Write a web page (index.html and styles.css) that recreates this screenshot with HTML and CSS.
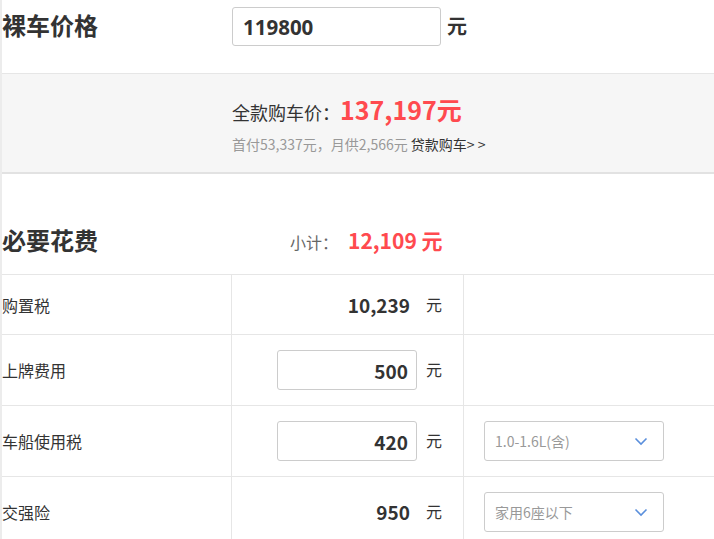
FILE: index.html
```html
<!DOCTYPE html>
<html lang="zh-CN">
<head>
  <meta charset="UTF-8">
  <meta name="viewport" content="width=device-width, initial-scale=1.0">
  <title>购车计算器</title>
  <link rel="stylesheet" href="styles.css">
</head>
<body>
<div class="calc">
  <div class="price-row">
    <h2 class="block-title">裸车价格</h2>
    <div class="price-field">
      <input type="text" class="price-input" value="119800">
      <span class="price-unit">元</span>
    </div>
  </div>

  <div class="total-band">
    <p class="total">全款购车价：<strong>137,197元</strong></p>
    <p class="loan">首付53,337元，月供2,566元 <a href="#">贷款购车&gt; &gt;</a></p>
  </div>

  <div class="section-head">
    <h2 class="block-title">必要花费</h2>
    <div class="subtotal">小计：<strong>12,109 元</strong></div>
  </div>

  <table class="fees">
    <tr class="row-short">
      <td class="fee-name">购置税</td>
      <td class="fee-value"><div class="val"><span class="fee-num">10,239</span><span class="unit">元</span></div></td>
      <td class="fee-opt"></td>
    </tr>
    <tr>
      <td class="fee-name">上牌费用</td>
      <td class="fee-value"><div class="val"><input type="text" class="fee-input" value="500"><span class="unit">元</span></div></td>
      <td class="fee-opt"></td>
    </tr>
    <tr>
      <td class="fee-name">车船使用税</td>
      <td class="fee-value"><div class="val"><input type="text" class="fee-input" value="420"><span class="unit">元</span></div></td>
      <td class="fee-opt">
        <div class="select-box">
          <span>1.0-1.6L(含)</span>
          <svg width="14" height="9" viewBox="0 0 14 9"><path d="M1.5 1.5 L7 7 L12.5 1.5" fill="none" stroke="#5a8fdc" stroke-width="1.6"/></svg>
        </div>
      </td>
    </tr>
    <tr>
      <td class="fee-name">交强险</td>
      <td class="fee-value"><div class="val"><span class="fee-num">950</span><span class="unit">元</span></div></td>
      <td class="fee-opt">
        <div class="select-box">
          <span>家用6座以下</span>
          <svg width="14" height="9" viewBox="0 0 14 9"><path d="M1.5 1.5 L7 7 L12.5 1.5" fill="none" stroke="#5a8fdc" stroke-width="1.6"/></svg>
        </div>
      </td>
    </tr>
  </table>
</div>
</body>
</html>
```

FILE: styles.css
```css
body {
  margin: 0;
  padding: 0;
  background-color: white;
  font-family: "Noto Sans CJK SC", "Microsoft YaHei", sans-serif;
  color: #333;
}

.calc {
  border-left: 2px solid #ececec;
  min-height: 539px;
}

.block-title {
  margin: 0;
  font-size: 24px;
  font-weight: bold;
  line-height: 32px;
  color: #333;
}

.price-row {
  display: flex;
  align-items: flex-start;
  height: 73px;
  box-sizing: border-box;
  padding-top: 7px;
}
.price-row .block-title {
  width: 230px;
  margin-top: 2px;
}

.price-field {
  display: flex;
  align-items: center;
}

.price-input {
  width: 209px;
  height: 39px;
  box-sizing: border-box;
  border: 1px solid #ccc;
  border-radius: 3px;
  padding: 0 10px;
  font-family: "Open Sans", sans-serif;
  font-size: 20.5px;
  font-weight: bold;
  color: #333;
}

.price-unit {
  margin-left: 6px;
  font-size: 20px;
  font-weight: bold;
  margin-top: -2px;
}

.total-band {
  background-color: #f6f6f6;
  border-top: 1px solid #e6e6e6;
  border-bottom: 2px solid #e2e2e2;
  height: 101px;
  padding-left: 230px;
  box-sizing: border-box;
  padding-top: 19px;
}

.total {
  margin: 0;
  font-size: 18px;
  line-height: 32px;
  color: #333;
}
.total strong {
  font-size: 25px;
  color: #ff4a4f;
}

.loan {
  margin: 6px 0 0;
  font-size: 14px;
  line-height: 20px;
  color: #999;
}
.loan a {
  color: #333;
  text-decoration: none;
}

.section-head {
  display: flex;
  align-items: center;
  padding-top: 50px;
  height: 100px;
  box-sizing: border-box;
  padding-bottom: 18px;
}
.section-head .block-title {
  width: 288px;
}

.subtotal {
  font-size: 16px;
  color: #666;
}
.subtotal strong {
  margin-left: 10px;
  font-size: 21px;
  color: #ff4a4f;
}

.fees {
  width: 100%;
  border-collapse: collapse;
  border-top: 1px solid #e6e6e6;
}

.fees td {
  border-bottom: 1px solid #e6e6e6;
  padding: 15px 0;
  height: 40px;
  font-size: 16px;
}

.fees .row-short td {
  height: 29px;
  padding: 15px 0;
}

.fee-name {
  width: 229px;
  color: #333;
}

.fee-value {
  width: 210px;
  border-left: 1px solid #e6e6e6;
  padding-right: 21px !important;
}

.val {
  display: flex;
  justify-content: flex-end;
  align-items: center;
}

.fee-num {
  font-size: 19px;
  font-weight: bold;
  line-height: 28px;
  padding-right: 7px;
}

.fee-input {
  width: 140px;
  height: 40px;
  box-sizing: border-box;
  border: 1px solid #ccc;
  border-radius: 3px;
  padding: 0 8px;
  text-align: right;
  font-family: "Noto Sans CJK SC", sans-serif;
  font-size: 19px;
  font-weight: bold;
  color: #333;
}

.unit {
  margin-left: 9px;
  font-size: 16px;
  line-height: 28px;
  margin-top: -2px;
}

.fee-opt {
  border-left: 1px solid #e6e6e6;
  padding-left: 20px !important;
}

.select-box {
  display: flex;
  align-items: center;
  justify-content: space-between;
  width: 180px;
  height: 40px;
  box-sizing: border-box;
  border: 1px solid #ccc;
  border-radius: 3px;
  padding: 0 15px 0 10px;
  font-size: 14px;
  color: #999;
}
```
